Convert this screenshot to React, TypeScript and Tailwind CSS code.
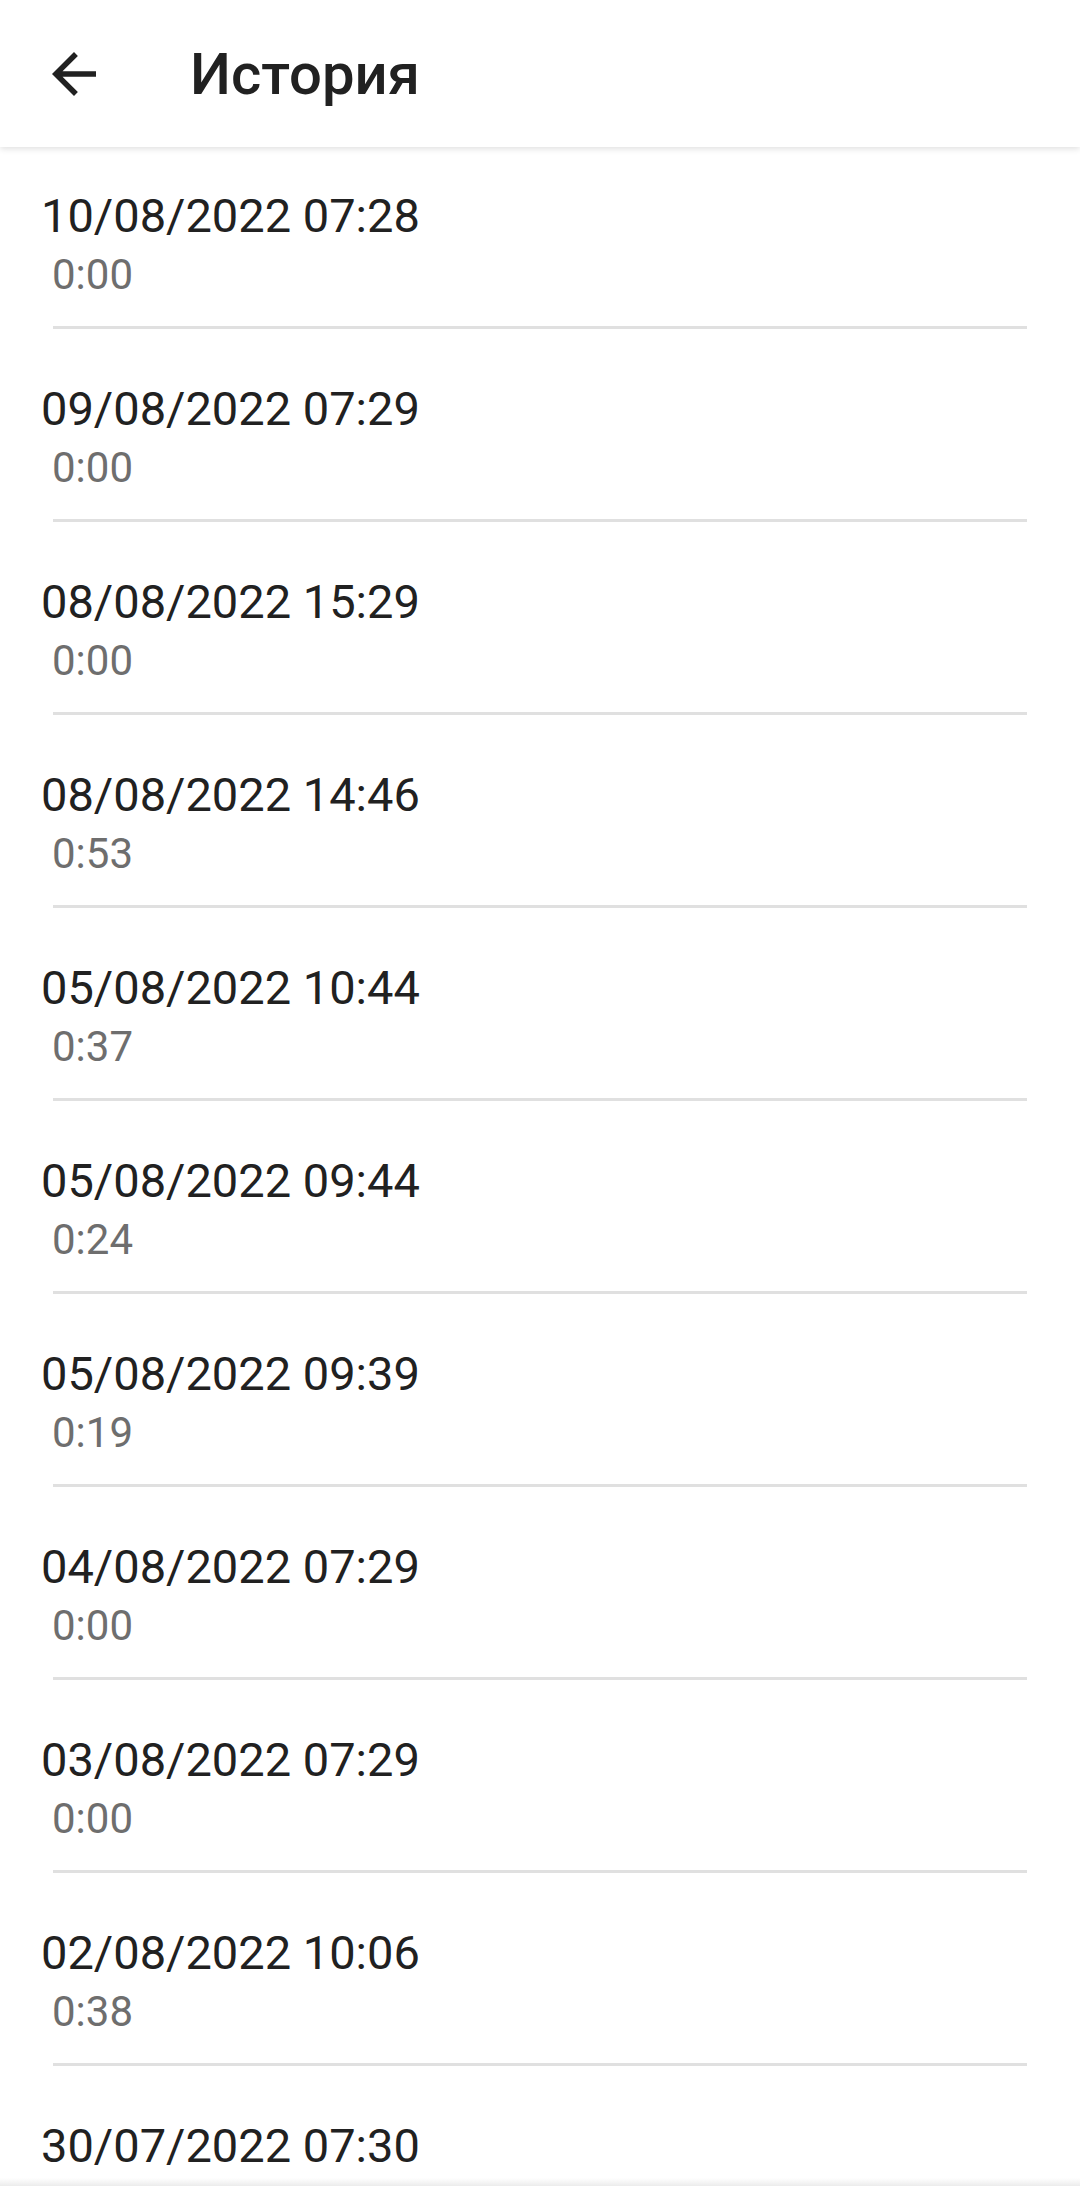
const items = [
  { date: "10/08/2022 07:28", dur: "0:00" },
  { date: "09/08/2022 07:29", dur: "0:00" },
  { date: "08/08/2022 15:29", dur: "0:00" },
  { date: "08/08/2022 14:46", dur: "0:53" },
  { date: "05/08/2022 10:44", dur: "0:37" },
  { date: "05/08/2022 09:44", dur: "0:24" },
  { date: "05/08/2022 09:39", dur: "0:19" },
  { date: "04/08/2022 07:29", dur: "0:00" },
  { date: "03/08/2022 07:29", dur: "0:00" },
  { date: "02/08/2022 10:06", dur: "0:38" },
  { date: "30/07/2022 07:30", dur: "0:00" },
];

export default function App() {
  return (
    <div className="relative h-[2186px] w-[1080px] overflow-hidden bg-white font-['Roboto',sans-serif]">
      {/* toolbar */}
      <header className="relative z-10 flex h-[147px] items-center bg-white shadow-[0_2px_6px_rgba(0,0,0,0.12)]">
        <button className="ml-[41px] flex h-[66px] w-[66px] items-center justify-center">
          <svg viewBox="0 0 24 24" className="h-[66px] w-[66px] fill-[#212121]">
            <path d="M20 11H7.83l5.59-5.59L12 4l-8 8 8 8 1.41-1.41L7.83 13H20v-2z" />
          </svg>
        </button>
        <h1 className="ml-[83px] text-[58px] font-medium leading-none text-[#212121]">История</h1>
      </header>

      {/* list */}
      <ul>
        {items.map((it, i) => (
          <li key={i}>
            <div className={`${i === 0 ? "pt-[43px]" : "pt-[54px]"} pb-[28px]`}>
              <div className="pl-[41px] text-[47px] leading-[52px] text-[#212121]">{it.date}</div>
              <div className="mt-[10px] pl-[52px] text-[42px] leading-[46px] text-[#6e6e6e]">{it.dur}</div>
            </div>
            <div className="mx-[53px] h-[3px] bg-[#e0e0e0]" />
          </li>
        ))}
      </ul>

      <div className="absolute bottom-0 left-0 right-0 h-[8px] bg-gradient-to-t from-[#ececec] to-transparent" />
    </div>
  );
}
